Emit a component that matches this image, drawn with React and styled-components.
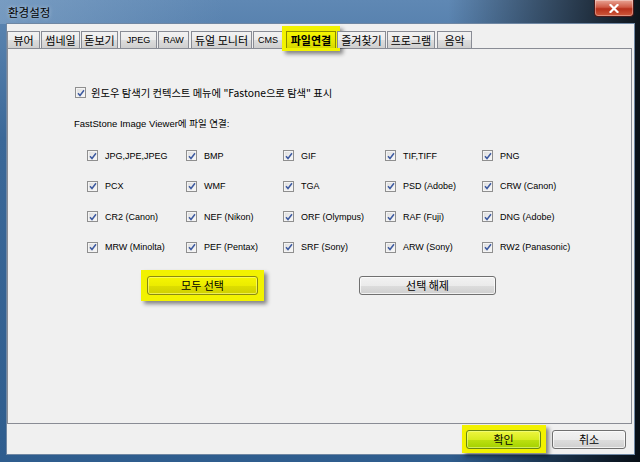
import React, { useState } from 'react';
import styled, { createGlobalStyle } from 'styled-components';

const GlobalStyle = createGlobalStyle`
  body {
    margin: 0;
    background: #000;
    overflow: hidden;
  }
`;

// Window frame
const Window = styled.div`
  width: 640px;
  height: 462px;
  display: flex;
  flex-direction: column;
  box-sizing: border-box;
  background:
    linear-gradient(90deg, transparent 0%, transparent 70%, rgba(0, 0, 0, 0.85) 100%),
    linear-gradient(180deg, #5f88b4 0%, #3b6898 30%, #2f5d8e 100%);
  font-family: "Liberation Sans", "Noto Sans CJK KR", sans-serif;
  font-size: 11px;
  color: #000;
`;

const TitleBar = styled.div`
  height: 24px;
  display: flex;
  justify-content: space-between;
  align-items: flex-start;
  padding-left: 8px;
  background: linear-gradient(90deg, rgba(150, 180, 210, 0.45) 0%, rgba(0, 0, 0, 0) 35%);
`;

const Title = styled.span`
  margin-top: 4px;
  font-family: "Noto Sans CJK KR", sans-serif;
  font-size: 11.5px;
  color: #000;
  text-shadow: 0 0 4px rgba(255, 255, 255, 0.6);
`;

const CloseButton = styled.div`
  width: 40px;
  height: 17px;
  margin-right: 6px;
  border: 1px solid #4b1a1a;
  border-top: none;
  border-radius: 0 0 4px 4px;
  box-sizing: border-box;
  background: linear-gradient(180deg, #e9a595 0%, #cf5a45 45%, #b7301b 55%, #cf5a3c 100%);
  display: flex;
  align-items: center;
  justify-content: center;
  box-shadow: inset 0 0 0 1px rgba(255, 255, 255, 0.35);
`;

const Client = styled.div`
  flex: 1;
  margin: 0 6px 8px 7px;
  background: #f0f0f0;
  display: flex;
  flex-direction: column;
  box-shadow: 0 0 0 1px #6f87a3;
`;

const TabStrip = styled.div`
  display: flex;
  padding: 7px 0 0 0;
  position: relative;
  z-index: 1;
`;

const Tab = styled.div`
  width: ${(p) => p.$w}px;
  margin-right: ${(p) => p.$gap ?? 1}px;
  height: 16px;
  border: 1px solid #898c95;
  border-bottom: none;
  box-sizing: content-box;
  background: linear-gradient(180deg, #f2f2f2 0%, #ebebeb 50%, #dddddd 51%, #cfcfcf 100%);
  display: flex;
  align-items: center;
  justify-content: center;
  font-family: ${(p) => (p.$latin ? '"Liberation Sans", sans-serif' : '"Noto Sans CJK KR", sans-serif')};
  font-size: ${(p) => (p.$latin ? '9px' : '11px')};
  white-space: nowrap;
`;

const ActiveTab = styled(Tab)`
  margin-right: 0;
  background: linear-gradient(180deg, #f6f600 0%, #e8e800 55%, #d8d800 100%);
  border-color: #8c8c00;
  font-weight: bold;
`;

const TabMark = styled.div`
  margin: -5px -3px -3px -4px;
  padding: 5px 4px 3px 4px;
  background: #f2f200;
  box-shadow: 3px 3px 4px rgba(0, 0, 0, 0.45);
  display: flex;
`;

const Panel = styled.div`
  flex: 1;
  margin-right: 2px;
  border: 1px solid #898c95;
  padding: 37px 0 0 67px;
  display: flex;
  flex-direction: column;
`;

const CheckRow = styled.label`
  display: flex;
  align-items: center;
  gap: 5px;
  font-family: ${(p) => (p.$kr ? '"Noto Sans CJK KR", sans-serif' : '"Liberation Sans", "Noto Sans CJK KR", sans-serif')};
  font-size: ${(p) => (p.$kr ? '10.3px' : '9px')};
  white-space: nowrap;
  height: 13px;
`;

const Box = styled.span`
  width: 11px;
  height: 11px;
  box-sizing: border-box;
  border: 1px solid #8f8f8f;
  background: linear-gradient(135deg, #dcdcdc 0%, #fafafa 100%);
  box-shadow: inset 0 0 0 1px #f4f4f4;
  display: flex;
  align-items: center;
  justify-content: center;
  flex-shrink: 0;
`;

const Label = styled.span`
  margin-left: ${(p) => p.$indent || 2}px;
`;

const Section = styled.div`
  margin-top: 17px;
  margin-left: -1px;
  font-family: "Liberation Sans", "Noto Sans CJK KR", sans-serif;
  font-size: 9.5px;
`;

const FileGrid = styled.div`
  display: grid;
  grid-template-columns: 99px 97px 102px 97px 110px;
  grid-auto-rows: 30.6px;
  margin: 19px 0 0 12px;
`;

const ButtonRow = styled.div`
  display: flex;
  align-items: center;
  margin: -1px 0 0 66px;
`;

const Button = styled.button`
  width: ${(p) => p.$w}px;
  height: 19px;
  border: 1px solid #707070;
  border-radius: 3px;
  background: linear-gradient(180deg, #f2f2f2 0%, #ebebeb 50%, #dddddd 51%, #cfcfcf 100%);
  box-shadow: inset 0 0 0 1px rgba(255, 255, 255, 0.7);
  font-family: "Noto Sans CJK KR", sans-serif;
  font-size: 11px;
  padding: 0;
  color: #000;
  display: flex;
  align-items: center;
  justify-content: center;
  line-height: 1;
  cursor: default;
`;

const YellowButton = styled(Button)`
  border-color: #8a8a10;
  background: linear-gradient(180deg, #f6f600 0%, #ecec00 50%, #dede00 51%, #d0d000 100%);
  box-shadow: inset 0 0 0 1px rgba(255, 255, 140, 0.6);
`;

const GreenButton = styled(Button)`
  border-color: #6a8810;
  background: linear-gradient(180deg, #eef640 0%, #d8ec20 50%, #bde010 51%, #a4d200 100%);
  box-shadow: inset 0 0 0 1px rgba(240, 255, 150, 0.6);
`;

const Mark = styled.div`
  padding: ${(p) => p.$pad || '6px'};
  background: #f2f200;
  box-shadow: 3px 3px 4px rgba(0, 0, 0, 0.45);
  display: flex;
`;

const Spacer = styled.div`
  width: ${(p) => p.$w}px;
`;

const Footer = styled.div`
  height: 30px;
  display: flex;
  align-items: center;
  justify-content: flex-end;
  padding-right: 8px;
  gap: 6px;
`;

const Check = () => (
  <Box>
    <svg width="8" height="8" viewBox="0 0 8 8">
      <path d="M1 4.2 L3 6.5 L7 1.2" fill="none" stroke="#3d5aa0" strokeWidth="1.5" />
    </svg>
  </Box>
);

const tabs = [
  { label: '뷰어', w: 31 },
  { label: '썸네일', w: 37 },
  { label: '돋보기', w: 35, gap: 2 },
  { label: 'JPEG', w: 35, latin: true },
  { label: 'RAW', w: 29, gap: 2 },
  { label: '듀얼 모니터', w: 59 },
  { label: 'CMS', w: 28, latin: true, gap: 3 },
  { label: '파일연결', w: 48, active: true },
  { label: '즐겨찾기', w: 47 },
  { label: '프로그램', w: 46, gap: 2 },
  { label: '음악', w: 33 },
];

const formats = [
  'JPG,JPE,JPEG', 'BMP', 'GIF', 'TIF,TIFF', 'PNG',
  'PCX', 'WMF', 'TGA', 'PSD (Adobe)', 'CRW (Canon)',
  'CR2 (Canon)', 'NEF (Nikon)', 'ORF (Olympus)', 'RAF (Fuji)', 'DNG (Adobe)',
  'MRW (Minolta)', 'PEF (Pentax)', 'SRF (Sony)', 'ARW (Sony)', 'RW2 (Panasonic)',
];

const App = () => {
  const [active] = useState('파일연결');

  return (
    <>
      <GlobalStyle />
      <Window>
        <TitleBar>
          <Title>환경설정</Title>
          <CloseButton>
            <svg width="10" height="9" viewBox="0 0 10 9">
              <path d="M1.5 1 L8.5 8 M8.5 1 L1.5 8" stroke="#fff" strokeWidth="2.2" strokeLinecap="square" />
            </svg>
          </CloseButton>
        </TitleBar>
        <Client>
          <TabStrip>
            {tabs.map((t) =>
              t.label === active ? (
                <TabMark key={t.label}>
                  <ActiveTab $w={t.w}>{t.label}</ActiveTab>
                </TabMark>
              ) : (
                <Tab key={t.label} $w={t.w} $gap={t.gap} $latin={t.latin || t.label === 'RAW'}>
                  {t.label}
                </Tab>
              )
            )}
          </TabStrip>
          <Panel>
            <CheckRow $kr>
              <Check />
              윈도우 탐색기 컨텍스트 메뉴에 "Fastone으로 탐색" 표시
            </CheckRow>
            <Section>FastStone Image Viewer에 파일 연결:</Section>
            <FileGrid>
              {formats.map((f) => (
                <CheckRow key={f}>
                  <Check />
                  <Label>{f}</Label>
                </CheckRow>
              ))}
            </FileGrid>
            <ButtonRow>
              <Mark>
                <YellowButton $w={111}>모두 선택</YellowButton>
              </Mark>
              <Spacer $w={95} />
              <Button $w={137}>선택 해제</Button>
            </ButtonRow>
          </Panel>
          <Footer>
            <Mark $pad="5px 5px 4px 4px">
              <GreenButton $w={75}>확인</GreenButton>
            </Mark>
            <Button $w={74}>취소</Button>
          </Footer>
        </Client>
      </Window>
    </>
  );
};

export default App;
